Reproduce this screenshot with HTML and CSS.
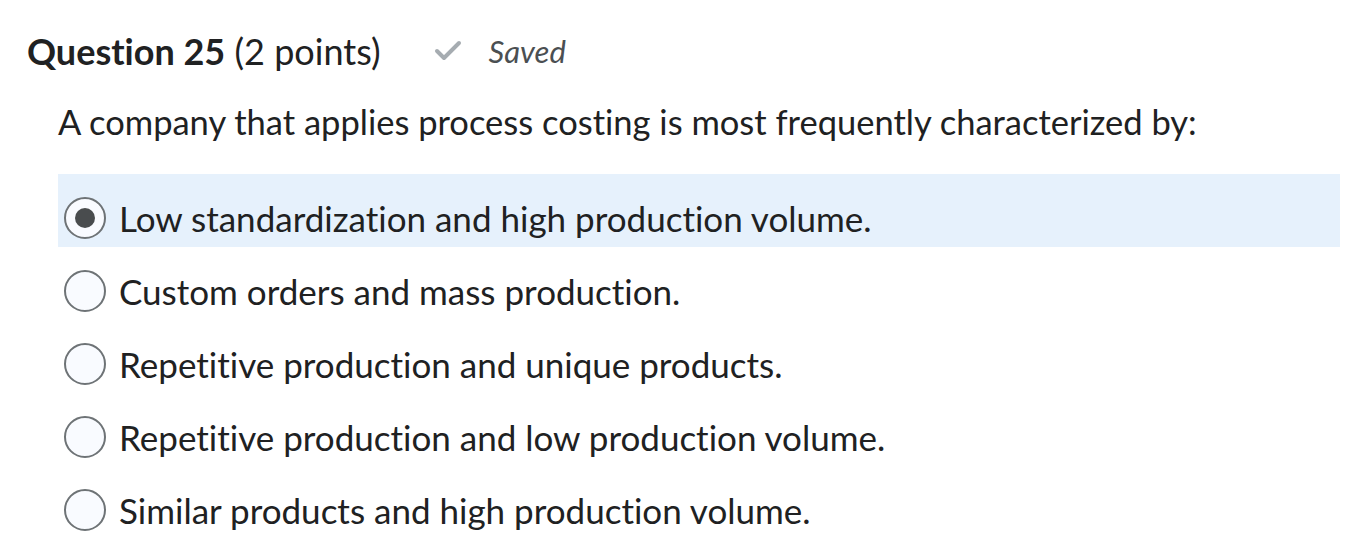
FILE: index.html
```html
<!DOCTYPE html>
<html>
<head>
<meta charset="utf-8">
<link rel="stylesheet" href="styles.css">
</head>
<body>
<div class="question">
  <div class="header">
    <h2 class="title"><strong>Question 25</strong> <span class="points">(2 points)</span></h2>
    <div class="saved">
      <svg class="check" width="30" height="24" viewBox="0 0 30 24"><path d="M4 12 L11 19 L26 4" fill="none" stroke="#a6acb1" stroke-width="4" stroke-linecap="round" stroke-linejoin="round"/></svg>
      <span>Saved</span>
    </div>
  </div>
  <p class="prompt">A company that applies process costing is most frequently characterized by:</p>
  <div class="options">
    <label class="option selected"><span class="radio checked"></span><span class="label">Low standardization and high production volume.</span></label>
    <label class="option"><span class="radio"></span><span class="label">Custom orders and mass production.</span></label>
    <label class="option"><span class="radio"></span><span class="label">Repetitive production and unique products.</span></label>
    <label class="option"><span class="radio"></span><span class="label">Repetitive production and low production volume.</span></label>
    <label class="option"><span class="radio"></span><span class="label">Similar products and high production volume.</span></label>
  </div>
</div>
</body>
</html>
```
FILE: styles.css
```css
html, body { margin: 0; padding: 0; background: #fff; }
body { font-family: Lato, "Noto Sans", sans-serif; color: #202122; font-variant-ligatures: none; }
.question { padding: 28px 16px 0 27px; }
.header { display: flex; align-items: center; height: 46px; }
.title { margin: 0; font-size: 36px; font-weight: 400; line-height: 46px; }
.title strong { font-weight: 700; }
.saved { display: flex; align-items: center; margin-left: 52px; color: #4b4f52; font-style: italic; font-size: 31px; }
.check { margin-right: 26px; }
.prompt { margin: 25px 0 0 31px; font-size: 34.5px; line-height: 46px; }
.options { margin: 29px 0 0 31px; display: flex; flex-direction: column; }
.option { display: flex; align-items: center; height: 73px; box-sizing: border-box; padding: 14px 0 0 6px; font-size: 35px; }
.option.selected { background: #e6f1fc; }
.radio { width: 42px; height: 42px; border: 2px solid #6e7376; border-radius: 50%; background: #f9fbff; box-sizing: border-box; margin-right: 13px; display: flex; align-items: center; justify-content: center; flex-shrink: 0; }
.radio.checked::after { content: ""; width: 20px; height: 20px; border-radius: 50%; background: #494c4e; }
```
